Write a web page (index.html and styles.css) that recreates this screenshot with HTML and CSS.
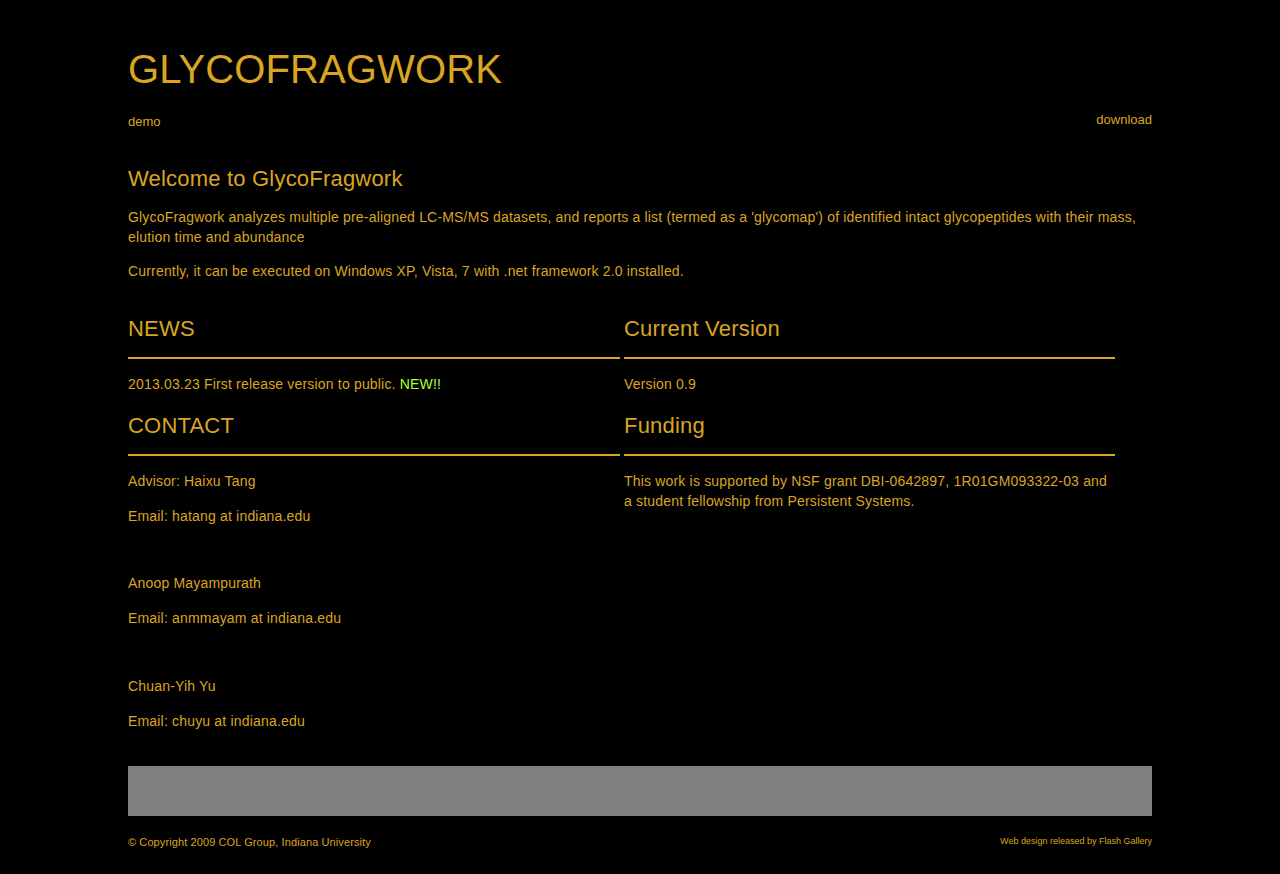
FILE: index.html
```html
<!DOCTYPE html>
<html lang="en">
<head>
<meta charset="utf-8">
<title>GlycoFragwork</title>
<link rel="stylesheet" href="styles.css">
</head>
<body>
<div class="page">
  <header class="header">
    <h1 class="logo">GLYCOFRAGWORK</h1>
    <nav class="nav">
      <a class="nav-link nav-demo" href="#">demo</a>
      <a class="nav-link nav-download" href="#">download</a>
    </nav>
  </header>

  <section class="intro">
    <h2 class="intro-title">Welcome to GlycoFragwork</h2>
    <p class="text">GlycoFragwork analyzes multiple pre-aligned LC-MS/MS datasets, and reports a list (termed as a 'glycomap') of identified intact glycopeptides with their mass, elution time and abundance</p>
    <p class="text">Currently, it can be executed on Windows XP, Vista, 7 with .net framework 2.0 installed.</p>
  </section>

  <div class="grid">
    <section class="box">
      <h2 class="box-title">NEWS</h2>
      <p class="text">2013.03.23 First release version to public. <span class="new">NEW!!</span></p>
    </section>
    <section class="box">
      <h2 class="box-title">Current Version</h2>
      <p class="text">Version 0.9</p>
    </section>
    <section class="box">
      <h2 class="box-title">CONTACT</h2>
      <p class="text">Advisor: Haixu Tang</p>
      <p class="text">Email: hatang at indiana.edu</p>
      <div class="spacer"></div>
      <p class="text">Anoop Mayampurath</p>
      <p class="text">Email: anmmayam at indiana.edu</p>
      <div class="spacer spacer-wide"></div>
      <p class="text">Chuan-Yih Yu</p>
      <p class="text">Email: chuyu at indiana.edu</p>
    </section>
    <section class="box">
      <h2 class="box-title">Funding</h2>
      <p class="text">This work is supported by NSF grant DBI-0642897, 1R01GM093322-03 and a student fellowship from Persistent Systems.</p>
    </section>
  </div>

  <div class="bar"></div>

  <footer class="footer">
    <span class="copy">© Copyright 2009 COL Group, Indiana University</span>
    <span class="credit">Web design released by Flash Gallery</span>
  </footer>
</div>
</body>
</html>
```

FILE: styles.css
```css
html, body {
  margin: 0;
  padding: 0;
  background: #000;
}

body {
  font-family: "Liberation Sans", Arial, sans-serif;
  color: #daa520;
}

.page {
  width: 1024px;
  margin: 0 auto;
  padding-top: 46px;
}

.logo {
  margin: 0;
  font-size: 40px;
  font-weight: normal;
  line-height: 46px;
  letter-spacing: 0.1px;
}

.nav {
  display: flex;
  justify-content: space-between;
  margin-top: 20px;
  font-size: 13px;
}

.nav-link {
  color: #daa520;
  text-decoration: none;
}

.nav-demo {
  padding-top: 2px;
}

.intro {
  margin-top: 36px;
}

.intro-title {
  margin: 0 0 14px;
  font-size: 22px;
  font-weight: normal;
  line-height: 28px;
  letter-spacing: 0.2px;
}

.text {
  margin: 0 0 14px;
  font-size: 14px;
  line-height: 20px;
  letter-spacing: 0.18px;
}

.grid {
  display: grid;
  grid-template-columns: 492px 491px;
  column-gap: 4px;
  row-gap: 4px;
  margin-top: 35px;
}

.box-title {
  margin: 0 0 15px;
  padding-bottom: 15px;
  font-size: 22px;
  font-weight: normal;
  line-height: 26px;
  letter-spacing: 0.2px;
  border-bottom: 2px solid #daa520;
}

.box .text {
  margin-bottom: 15px;
}

.spacer {
  height: 17px;
  margin-bottom: 15px;
}

.spacer-wide {
  height: 18px;
}

.new {
  color: #adff2f;
}

.bar {
  height: 50px;
  background: #808080;
  margin-top: 20px;
}

.footer {
  display: flex;
  justify-content: space-between;
  align-items: flex-start;
  padding-top: 20px;
  padding-bottom: 20px;
}

.copy {
  font-size: 11px;
  letter-spacing: 0.1px;
}

.credit {
  font-size: 9px;
}
```
